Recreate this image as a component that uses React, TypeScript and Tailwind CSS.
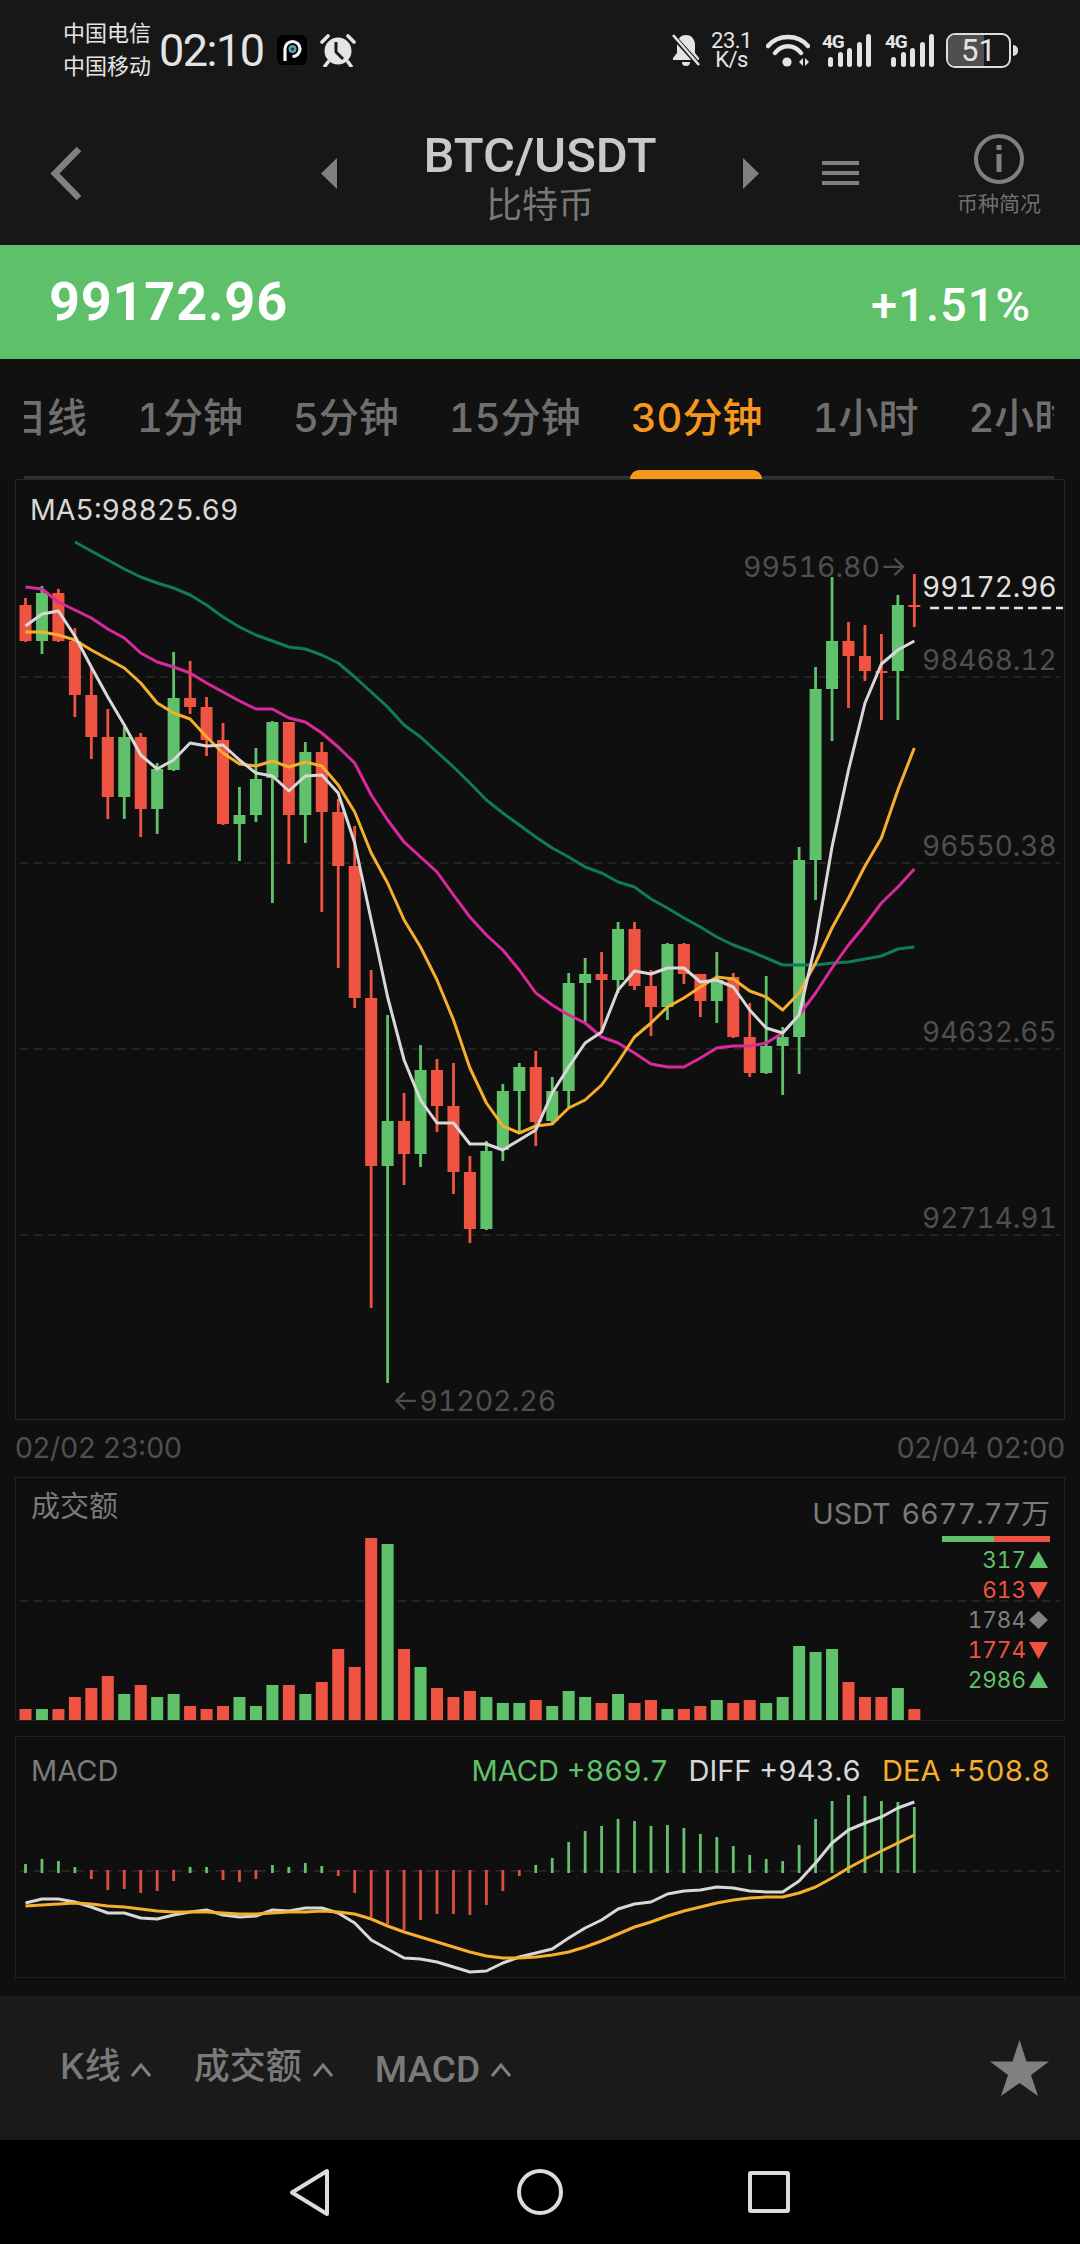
type Candle = [number, number, number, number, "r" | "g"];

const RED = "#ee5441";
const GREEN = "#5fc26a";

// high, body top, body bottom, low in page px
const candles: Candle[] = [
  [598, 605, 641, 642, "r"], [586, 593, 641, 654, "g"], [589, 593, 641, 642, "r"], [628, 641, 695, 717, "r"],
  [667, 695, 737, 759, "r"], [709, 737, 797, 819, "r"], [727, 737, 797, 819, "g"], [733, 737, 809, 837, "r"],
  [763, 769, 809, 834, "g"], [652, 698, 770, 771, "g"], [661, 698, 707, 714, "r"], [697, 707, 740, 756, "r"],
  [723, 740, 824, 825, "r"], [787, 815, 824, 861, "g"], [748, 779, 815, 822, "g"], [721, 722, 778, 903, "g"],
  [722, 722, 815, 864, "r"], [742, 752, 815, 843, "g"], [742, 752, 812, 912, "r"], [799, 812, 866, 968, "r"],
  [826, 866, 998, 1008, "r"], [970, 998, 1166, 1308, "r"], [1015, 1121, 1166, 1383, "g"], [1093, 1121, 1154, 1185, "r"],
  [1045, 1070, 1154, 1167, "g"], [1059, 1070, 1106, 1132, "r"], [1063, 1106, 1172, 1194, "r"], [1156, 1172, 1229, 1243, "r"],
  [1141, 1151, 1229, 1230, "g"], [1084, 1091, 1150, 1161, "g"], [1063, 1067, 1091, 1132, "g"], [1051, 1067, 1122, 1146, "r"],
  [1077, 1091, 1121, 1125, "g"], [973, 983, 1091, 1107, "g"], [958, 974, 983, 1022, "g"], [952, 974, 980, 1032, "r"],
  [922, 929, 980, 993, "g"], [922, 929, 986, 990, "r"], [970, 986, 1007, 1036, "r"], [943, 944, 1007, 1020, "g"],
  [943, 944, 974, 984, "r"], [974, 974, 1001, 1017, "r"], [952, 980, 1001, 1023, "g"], [973, 977, 1037, 1038, "r"],
  [1003, 1037, 1073, 1077, "r"], [976, 1046, 1073, 1074, "g"], [1027, 1037, 1046, 1095, "g"], [847, 860, 1037, 1074, "g"],
  [667, 689, 860, 900, "g"], [577, 641, 689, 741, "g"], [622, 641, 656, 708, "r"], [625, 656, 671, 681, "r"],
  [634, 671, 673, 720, "r"], [595, 605, 671, 720, "g"], [574, 605, 607, 627, "r"],
];

const ma5 = [626, 614, 611, 636, 667, 697, 725, 755, 769, 760, 743, 746, 745, 760, 773, 776, 791, 776, 775, 793, 843, 920, 997, 1060, 1100, 1123, 1123, 1144, 1144, 1150, 1140, 1130, 1093, 1067, 1043, 1032, 990, 971, 974, 968, 968, 982, 980, 987, 1010, 1028, 1033, 1015, 943, 847, 770, 703, 664, 650, 641];
const ma10 = [632, 632, 635, 640, 650, 659, 668, 683, 703, 713, 719, 737, 753, 764, 766, 761, 767, 762, 766, 785, 812, 853, 883, 920, 947, 980, 1020, 1068, 1103, 1126, 1133, 1126, 1124, 1108, 1100, 1085, 1062, 1037, 1023, 1007, 998, 987, 977, 979, 991, 997, 1010, 993, 963, 928, 898, 866, 838, 790, 748];
const ma20 = [587, 589, 602, 610, 618, 629, 638, 653, 662, 667, 673, 683, 692, 701, 709, 709, 718, 722, 733, 747, 763, 795, 820, 842, 857, 872, 895, 917, 935, 950, 970, 993, 1005, 1015, 1023, 1037, 1043, 1053, 1064, 1067, 1067, 1058, 1048, 1046, 1046, 1043, 1033, 1015, 993, 968, 945, 925, 903, 887, 869];
// starts at the fourth candle
const ma30 = [542, 551, 560, 569, 577, 583, 588, 595, 605, 617, 627, 635, 641, 647, 649, 655, 663, 677, 692, 707, 725, 737, 752, 767, 783, 800, 813, 825, 837, 848, 857, 867, 873, 882, 887, 899, 908, 918, 927, 937, 945, 951, 958, 965, 965, 965, 963, 962, 959, 956, 949, 947];

const volumes = [11, 11, 11, 23, 32, 44, 26, 35, 23, 26, 14, 11, 14, 23, 14, 35, 35, 26, 38, 71, 53, 182, 176, 71, 53, 32, 23, 29, 23, 17, 17, 20, 14, 29, 23, 17, 26, 17, 20, 11, 11, 14, 20, 17, 20, 17, 23, 74, 68, 71, 38, 23, 23, 32, 11];

// tip of each MACD bar, page px
const macdBars = [1864, 1859, 1861, 1867, 1879, 1890, 1889, 1893, 1891, 1881, 1867, 1867, 1880, 1882, 1879, 1865, 1867, 1863, 1866, 1876, 1893, 1917, 1924, 1930, 1920, 1914, 1914, 1915, 1905, 1891, 1876, 1865, 1858, 1842, 1831, 1826, 1819, 1821, 1826, 1825, 1828, 1834, 1837, 1846, 1855, 1859, 1861, 1845, 1819, 1801, 1795, 1796, 1801, 1802, 1807];
const macdDiff = [1903, 1899, 1899, 1902, 1907, 1913, 1913, 1918, 1919, 1915, 1912, 1910, 1915, 1917, 1916, 1910, 1911, 1908, 1908, 1913, 1923, 1940, 1949, 1958, 1959, 1962, 1967, 1972, 1971, 1963, 1957, 1953, 1949, 1938, 1928, 1920, 1909, 1904, 1902, 1894, 1891, 1890, 1887, 1888, 1891, 1892, 1892, 1881, 1863, 1843, 1830, 1823, 1817, 1808, 1802];
const macdDea = [1906, 1905, 1904, 1903, 1904, 1906, 1907, 1909, 1911, 1912, 1912, 1912, 1913, 1914, 1914, 1913, 1912, 1912, 1911, 1912, 1914, 1919, 1926, 1932, 1937, 1942, 1947, 1952, 1956, 1958, 1958, 1957, 1955, 1952, 1947, 1941, 1934, 1927, 1922, 1916, 1911, 1907, 1903, 1900, 1898, 1897, 1897, 1893, 1887, 1878, 1868, 1859, 1851, 1843, 1835];

const xAt = (i: number) => 25.5 + 16.46 * i;
const colorAt = (i: number) => (candles[i][4] === "r" ? RED : GREEN);
const toPoints = (ys: number[], start = 0) => ys.map((y, i) => `${xAt(i + start).toFixed(1)},${y}`).join(" ");

function PriceChart() {
  return (
    <svg className="absolute inset-0 block h-full w-full" viewBox="16 480 1048 939">
      {[677, 863, 1049, 1235].map((y) => (
        <line key={y} x1="20" x2="1060" y1={y} y2={y} stroke="#2b2b2b" strokeWidth="1.5" strokeDasharray="8 6" />
      ))}
      {candles.map(([high, top, bottom, low], i) => (
        <g key={i} fill={colorAt(i)}>
          <rect x={xAt(i) - 1.4} y={high} width="2.8" height={low - high} />
          <rect x={xAt(i) - 6} y={top} width="12" height={Math.max(bottom - top, 2)} />
        </g>
      ))}
      <line x1="930" x2="1063" y1="608" y2="608" stroke="#e2e2e2" strokeWidth="2.5" strokeDasharray="9 5" />
      <polyline points={toPoints(ma30, 3)} fill="none" stroke="#0f7a60" strokeWidth="3" strokeLinejoin="round" />
      <polyline points={toPoints(ma20)} fill="none" stroke="#dc289e" strokeWidth="3" strokeLinejoin="round" />
      <polyline points={toPoints(ma10)} fill="none" stroke="#f6ae2d" strokeWidth="3" strokeLinejoin="round" />
      <polyline points={toPoints(ma5)} fill="none" stroke="#d8d8d8" strokeWidth="3" strokeLinejoin="round" />
    </svg>
  );
}

function VolumeChart() {
  return (
    <svg className="absolute inset-0 block h-full w-full" viewBox="16 1478 1048 242">
      <line x1="20" x2="1060" y1="1601" y2="1601" stroke="#2b2b2b" strokeWidth="1.5" strokeDasharray="8 6" />
      {volumes.map((h, i) => (
        <rect key={i} x={xAt(i) - 6} y={1720 - h} width="12" height={h} fill={colorAt(i)} />
      ))}
    </svg>
  );
}

function MacdChart() {
  const zero = 1871;
  return (
    <svg className="absolute inset-0 block h-full w-full" viewBox="16 1737 1048 240">
      <line x1="20" x2="1060" y1={zero} y2={zero} stroke="#2b2b2b" strokeWidth="1.5" strokeDasharray="8 6" />
      {macdBars.map((tip, i) => (
        <rect
          key={i}
          x={xAt(i) - 1.4}
          y={Math.min(tip, zero - 1)}
          width="2.8"
          height={tip < zero ? zero + 2 - tip : tip - zero + 1}
          fill={tip < zero ? "#66c070" : "#d9503f"}
        />
      ))}
      <polyline points={toPoints(macdDiff)} fill="none" stroke="#d8d8d8" strokeWidth="3" strokeLinejoin="round" />
      <polyline points={toPoints(macdDea)} fill="none" stroke="#f6ae2d" strokeWidth="3" strokeLinejoin="round" />
    </svg>
  );
}

function SignalBars() {
  const bars = [10, 15, 19, 25, 33];
  return (
    <div className="flex items-end gap-[4.5px]">
      {bars.map((h) => (
        <span key={h} className="block w-[5px] rounded-full bg-[#e4e4e4]" style={{ height: h }} />
      ))}
    </div>
  );
}

function FourG() {
  return (
    <div className="relative h-[34px] w-[48px]">
      <span className="absolute -left-[1px] top-0 text-[19px] font-bold leading-[18px] tracking-[-1.2px] text-[#e4e4e4] font-['Roboto',sans-serif]">4G</span>
      <div className="absolute bottom-0 left-[5px]">
        <SignalBars />
      </div>
    </div>
  );
}

function StatusBar() {
  return (
    <div className="flex h-[100px] items-center pl-[63px] pr-[62px] text-[#e4e4e4]">
      <div className="flex flex-col text-[22px] leading-[33px]">
        <span>中国电信</span>
        <span>中国移动</span>
      </div>
      <span className="ml-[8px] text-[45px] leading-none tracking-[-1.5px] font-['Roboto',sans-serif]">02:10</span>
      <svg className="ml-[13px]" width="30" height="30" viewBox="0 0 30 30">
        <rect width="30" height="30" rx="6" fill="#000" />
        <path d="M8 26V14a7.5 7.5 0 1 1 7.5 7.5" fill="none" stroke="#f2f2f2" strokeWidth="3.2" />
        <circle cx="15.5" cy="14" r="4" fill="#5d9fb0" />
        <circle cx="15.5" cy="14" r="1.6" fill="#20343c" />
      </svg>
      <svg className="ml-[13px]" width="36" height="34" viewBox="0 0 36 34">
        <circle cx="18" cy="18" r="13.500" fill="#e4e4e4" />
        <path d="M16 9v10l7 7" fill="none" stroke="#181818" strokeWidth="3" />
        <path d="M2 9 8 3M34 9 28 3M8 29l-3 4M28 29l3 4" fill="none" stroke="#e4e4e4" strokeWidth="3.6" strokeLinecap="round" />
      </svg>

      <svg className="ml-auto" width="30" height="34" viewBox="0 0 30 34">
        <path d="M15 2c6 0 9 5 9 10v8l4 5v2H2v-2l4-5v-8c0-5 3-10 9-10z" fill="#e4e4e4" />
        <path d="M11 29h8a4 4 0 0 1-8 0z" fill="#e4e4e4" />
        <path d="M1 2 29 33" stroke="#181818" strokeWidth="5" />
        <path d="M2 2 28 32" stroke="#e4e4e4" strokeWidth="2.6" />
      </svg>
      <div className="ml-[11px] flex w-[39px] flex-col items-center text-[22px] leading-[19px] tracking-[-0.5px] font-['Roboto',sans-serif]">
        <span>23.1</span>
        <span>K/s</span>
      </div>
      <svg className="ml-[15px]" width="44" height="34" viewBox="0 0 44 34">
        <path d="M2 13C12 1 32 1 42 13M9 20C16 11 28 11 35 20" fill="none" stroke="#e4e4e4" strokeWidth="4.4" strokeLinecap="round" />
        <circle cx="21" cy="29" r="4.6" fill="#e4e4e4" />
        <path d="M33 29l4-4v8zM39 25l4 4-4 4z" fill="#e4e4e4" />
      </svg>
      <div className="ml-[13px]">
        <FourG />
      </div>
      <div className="ml-[15px]">
        <FourG />
      </div>
      <div className="relative ml-[12px] flex h-[35px] w-[65px] items-center justify-center overflow-hidden rounded-[9px] border-2 border-[#dedede]">
        <span className="absolute inset-y-0 left-0 w-[36px] bg-[#4f4f4f]" />
        <span className="relative text-[31px] leading-none font-['Roboto',sans-serif]">51</span>
      </div>
      <span className="ml-[2px] h-[11px] w-[5px] rounded-r-full bg-[#dedede]" />
    </div>
  );
}

function Header() {
  return (
    <div className="flex h-[145px] items-start pl-[50px] text-[#808080]">
      <svg className="mt-[46px]" width="33" height="55" viewBox="0 0 33 55">
        <path d="M29 3 5 27.5 29 52" fill="none" stroke="#808080" strokeWidth="6.5" />
      </svg>
      <svg className="ml-[238px] mt-[58px]" width="16" height="31" viewBox="0 0 16 31">
        <path d="M16 0v31L0 15.5z" fill="#808080" />
      </svg>
      <div className="ml-[53px] flex w-[300px] flex-col items-center pt-[32px]">
        <span className="text-[49px] font-medium leading-[47px] text-[#c9c9c9] font-['Roboto',sans-serif]">BTC/USDT</span>
        <span className="mt-[6px] text-[36px] leading-[40px] text-[#787878]">比特币</span>
      </div>
      <svg className="ml-[53px] mt-[58px]" width="16" height="31" viewBox="0 0 16 31">
        <path d="M0 0v31l16-15.5z" fill="#808080" />
      </svg>
      <div className="ml-[63px] mt-[61px] flex w-[37px] flex-col gap-[6px]">
        <span className="h-[4px] bg-[#808080]" />
        <span className="h-[4px] bg-[#808080]" />
        <span className="h-[4px] bg-[#808080]" />
      </div>
      <div className="ml-[98px] mt-[34px] flex w-[84px] flex-col items-center">
        <svg width="50" height="50" viewBox="0 0 50 50">
          <circle cx="25" cy="25" r="23" fill="none" stroke="#808080" strokeWidth="4" />
          <rect x="22.5" y="11" width="5" height="5" fill="#808080" />
          <rect x="22.5" y="20" width="5" height="18" fill="#808080" />
        </svg>
        <span className="mt-[8px] whitespace-nowrap text-[21px] leading-[24px] text-[#707070]">币种简况</span>
      </div>
    </div>
  );
}

const tabs = ["日线", "1分钟", "5分钟", "15分钟", "30分钟", "1小时", "2小时"];

function Tabs() {
  return (
    <div className="relative flex h-[120px] flex-col bg-[#111111]">
      <div className="ml-[24px] w-[1030px] overflow-hidden pt-[35px]">
        <div className="-ml-[17px] flex gap-[50px] whitespace-nowrap text-[40px] font-medium leading-[48px] text-[#6f6f6f] tabular-nums">
          {tabs.map((t) => (
            <span key={t} className={t === "30分钟" ? "text-[#f7981d]" : ""}>
              {t}
            </span>
          ))}
        </div>
      </div>
      <div className="ml-[24px] mt-auto h-[3px] w-[1030px] bg-[#303030]" />
      <span className="absolute bottom-0 left-[630px] h-[9px] w-[132px] rounded-t-[10px] bg-[#f7981d]" />
    </div>
  );
}

function Arrow({ down, diamond }: { down?: boolean; diamond?: boolean }) {
  return (
    <svg className="ml-[3px]" width="19" height="18" viewBox="0 0 19 18">
      {diamond ? (
        <path d="M9.5 0 19 9l-9.5 9L0 9z" fill="#808080" />
      ) : down ? (
        <path d="M0 1h19l-9.5 17z" fill={RED} />
      ) : (
        <path d="M9.5 0 19 17H0z" fill={GREEN} />
      )}
    </svg>
  );
}

function Chevron({ className }: { className: string }) {
  return (
    <svg className={className} width="22" height="15" viewBox="0 0 22 15">
      <path d="M2 14 11 3l9 11" fill="none" stroke="#808080" strokeWidth="3" />
    </svg>
  );
}

function Footer() {
  return (
    <div className="flex h-[144px] items-center bg-[#1a1a1a] pb-[4px] pl-[60px] pr-[31px] text-[36px] font-medium leading-[40px] text-[#7a7a7a]">
      <span>K线</span>
      <Chevron className="ml-[9px] mt-[6px]" />
      <span className="ml-[42px]">成交额</span>
      <Chevron className="ml-[10px] mt-[6px]" />
      <span className="ml-[41px] mt-[8px] text-[37px] font-['Roboto',sans-serif]">MACD</span>
      <Chevron className="ml-[10px] mt-[6px]" />
      <svg className="ml-auto mt-[4px]" width="59" height="56" viewBox="0 0 59 56">
        <path d="M29.5 0 36.5 21.5H59L41 35l7 21-18.500-13L11 56l7-21L0 21.500h22.500z" fill="#808080" />
      </svg>
    </div>
  );
}

function NavBar() {
  return (
    <div className="flex h-[104px] items-center bg-black pl-[289px]">
      <svg width="41" height="49" viewBox="0 0 41 49">
        <path d="M38 3v43L3 24.500z" fill="none" stroke="#dcdcdc" strokeWidth="4" strokeLinejoin="round" />
      </svg>
      <span className="ml-[187px] h-[46px] w-[46px] rounded-full border-4 border-[#dcdcdc]" />
      <span className="ml-[185px] h-[42px] w-[42px] rounded-[3px] border-4 border-[#dcdcdc]" />
    </div>
  );
}

export default function App() {
  return (
    <div className="h-[2244px] w-[1080px] overflow-hidden bg-[#0f0f0f] font-['Inter','Noto_Sans_CJK_SC',sans-serif]">
      <div className="h-[245px] bg-[#171717]">
        <StatusBar />
        <Header />
      </div>

      <div className="flex h-[114px] items-center justify-between bg-[#5fc06a] pl-[49px] pr-[49px] font-['Roboto',sans-serif] text-white">
        <span className="text-[54px] font-bold leading-none tracking-[0.8px]">99172.96</span>
        <span className="mt-[4px] text-[47px] font-medium leading-none tracking-[1px]">+1.51%</span>
      </div>

      <Tabs />

      <div className="relative ml-[15px] h-[941px] w-[1050px] border border-[#262626] text-[28px] leading-[34px] text-[#4f4f4f] tabular-nums">
        <PriceChart />
        <span className="absolute left-[14px] top-[13px] text-[28.5px] text-[#d8d8d8]">MA5:98825.69</span>
        <span className="absolute left-[727px] top-[70px] text-[28.5px]">99516.80→</span>
        <span className="absolute left-[906px] top-[90px] text-[#e2e2e2]">99172.96</span>
        <span className="absolute left-[906px] top-[163px]">98468.12</span>
        <span className="absolute left-[906px] top-[349px]">96550.38</span>
        <span className="absolute left-[906px] top-[535px]">94632.65</span>
        <span className="absolute left-[906px] top-[721px]">92714.91</span>
        <span className="absolute left-[376px] top-[904px] text-[28.5px]">←91202.26</span>
      </div>

      <div className="flex h-[57px] items-center justify-between px-[15px] pb-[2px] text-[28.3px] leading-[34px] text-[#4f4f4f]">
        <span>02/02 23:00</span>
        <span>02/04 02:00</span>
      </div>

      <div className="relative ml-[15px] h-[244px] w-[1050px] border border-[#222222] text-[29px] leading-[34px] text-[#7a7a7a] tabular-nums">
        <VolumeChart />
        <span className="absolute left-[15px] top-[12px]">成交额</span>
        <div className="absolute right-[16px] top-[19px] flex flex-col items-end">
          <span className="-mr-[2px] whitespace-nowrap text-[28.8px] [word-spacing:3px]">USDT 6677.77万</span>
          <div className="-mr-[2px] mt-[5px] flex h-[6px] w-[108px]">
            <span className="w-[52px] bg-[#5fc26a]" />
            <span className="flex-1 bg-[#ee5441]" />
          </div>
          <div className="mt-[3px] flex flex-col items-end text-[22.5px] leading-[30px]">
            <div className="flex items-center text-[#5fc26a]">317<Arrow /></div>
            <div className="flex items-center text-[#ee5441]">613<Arrow down /></div>
            <div className="flex items-center text-[#808080]">1784<Arrow diamond /></div>
            <div className="flex items-center text-[#ee5441]">1774<Arrow down /></div>
            <div className="flex items-center text-[#5fc26a]">2986<Arrow /></div>
          </div>
        </div>
      </div>

      <div className="relative ml-[15px] mt-[15px] h-[242px] w-[1050px] border border-[#222222] text-[29px] leading-[34px] tabular-nums">
        <MacdChart />
        <div className="absolute left-[15px] right-[14px] top-[17px] flex items-center">
          <span className="text-[#7a7a7a]">MACD</span>
          <span className="ml-auto text-[#5fc26a]">MACD +869.7</span>
          <span className="ml-[20px] text-[#d8d8d8]">DIFF +943.6</span>
          <span className="ml-[21px] text-[#f6ae2d]">DEA +508.8</span>
        </div>
      </div>

      <div className="h-[18px]" />
      <Footer />
      <NavBar />
    </div>
  );
}
